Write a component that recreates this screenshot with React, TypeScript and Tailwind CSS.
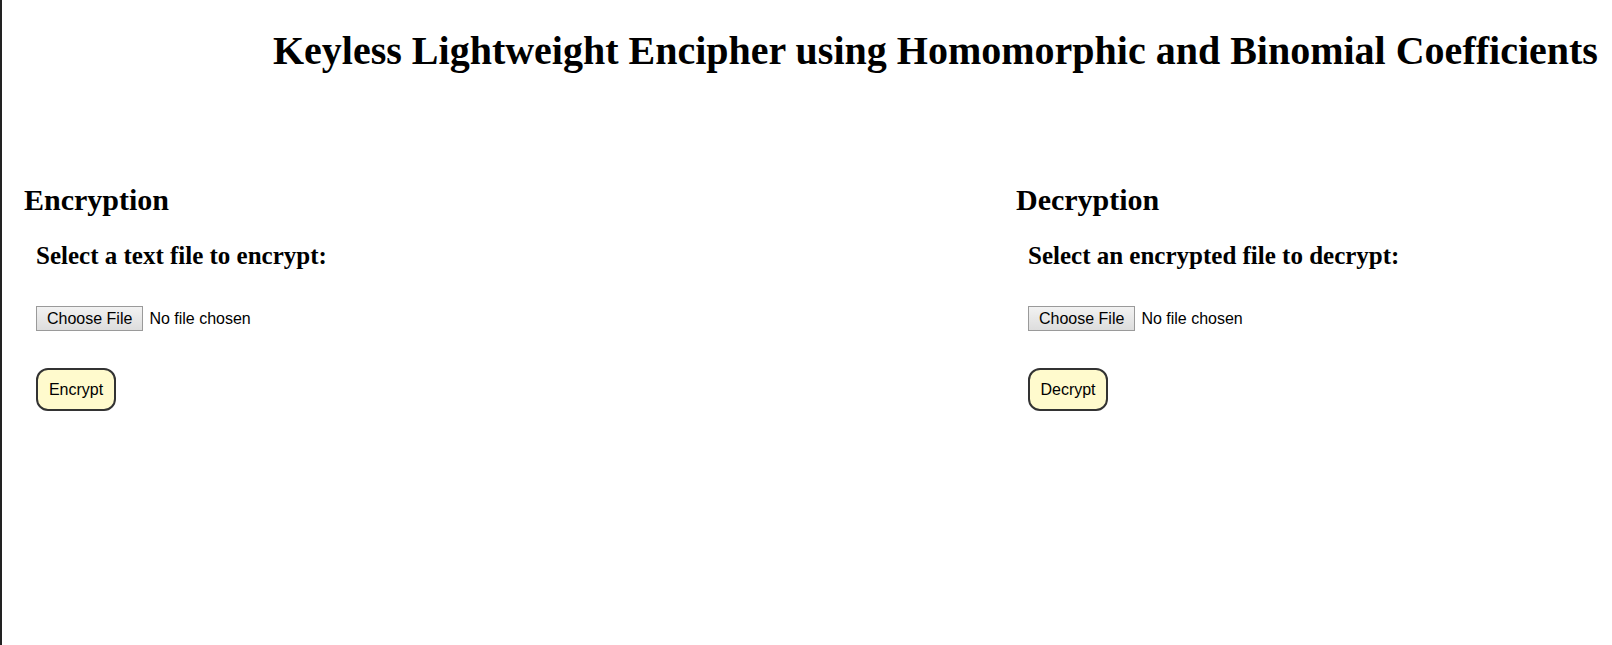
export default function App() {
  return (
    <div className="min-h-[645px] w-full bg-white border-l-2 border-[#222] text-black">
      {/* Title */}
      <h1 className="pt-[31px] pl-[271px] whitespace-nowrap font-bold text-[40px] leading-none font-['Liberation_Serif',serif]">
        Keyless Lightweight Encipher using Homomorphic and Binomial Coefficients
      </h1>

      <div className="flex pt-[114px]">
        <Panel
          className="w-[1014px] pl-[22px]"
          heading="Encryption"
          label="Select a text file to encrypt:"
          action="Encrypt"
        />
        <Panel
          className="flex-1"
          heading="Decryption"
          label="Select an encrypted file to decrypt:"
          action="Decrypt"
        />
      </div>
    </div>
  );
}

function Panel({
  className,
  heading,
  label,
  action,
}: {
  className: string;
  heading: string;
  label: string;
  action: string;
}) {
  return (
    <div className={className}>
      <h2 className="font-bold text-[30px] leading-none font-['Liberation_Serif',serif]">{heading}</h2>
      <div className="pl-[12px]">
        <h3 className="mt-[28px] font-bold text-[25px] leading-none font-['Liberation_Serif',serif]">{label}</h3>
        <div className="mt-[38px] flex items-center gap-[6px] font-['Liberation_Sans',sans-serif] text-[16px]">
          <span className="h-[25px] px-[10px] flex items-center border border-[#9a9a9a] bg-gradient-to-b from-[#f2f2f2] to-[#dddddd] leading-none">
            Choose File
          </span>
          <span className="leading-none">No file chosen</span>
        </div>
        <button className="mt-[37px] h-[43px] w-[80px] rounded-[12px] border-2 border-[#333] bg-[#fffacd] font-['Liberation_Sans',sans-serif] text-[16px] leading-none">
          {action}
        </button>
      </div>
    </div>
  );
}
